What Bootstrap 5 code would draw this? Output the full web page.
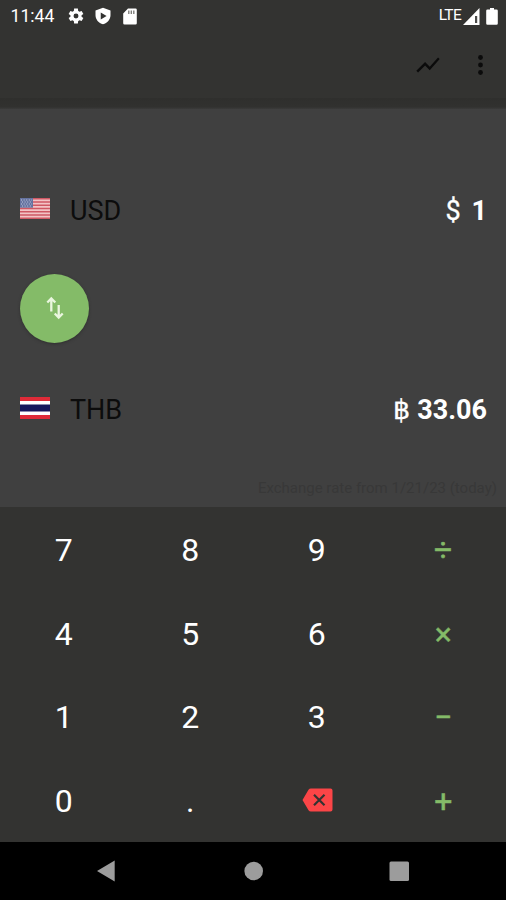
<!DOCTYPE html>
<html lang="en">
<head>
<meta charset="utf-8">
<meta name="viewport" content="width=device-width, initial-scale=1">
<title>Currency converter</title>
<link href="https://cdn.jsdelivr.net/npm/bootstrap@5.3.0/dist/css/bootstrap.min.css" rel="stylesheet">
<style>
body{font-family:Roboto,"Liberation Sans",sans-serif;background:#333331;color:#fff;line-height:1}
svg{display:block;flex:none}
.app{height:900px;overflow:hidden}
.status{height:32px;font-size:17.6px;padding:0 8px 0 10.5px}
.status span{padding-top:1px}
.status .lte{font-size:15.5px;letter-spacing:-.7px;padding:0}
.gear{margin-left:13px}
.shield{margin-left:9px}
.sdcard{margin-left:11px}
.signal{margin-left:2px}
.battery{margin-left:6px}
.toolbar{height:66px;padding:0 14.500px 0 0;gap:26px}
.edge{height:11px;background:linear-gradient(#2f2f2d,#31312f 80%,#3b3b3a)}
.panel{height:398px;background:#404040;padding:71px 19px 0 20px}
.cur{height:60px;font-size:27px}
.cur svg{margin-bottom:3px}
.cur span{padding-top:2px}
.code{color:#0c0c0c;margin-left:20px}
.symbol{-webkit-text-stroke:.3px #fff}
.swaprow{height:139px;padding-bottom:3px}
.swap{width:69px;height:69px;background:#84bb68;box-shadow:0 1px 3px #2228}
.rate{font-size:15px;color:#383838;margin-right:-10px;padding-bottom:11px}
.keys{height:335px}
.key{height:83.6px;font-size:32px;color:#fff;background:none;border:0;padding:2px 0 0 1px}
.key svg{margin:0 0 2px 1px}
.op{color:#84bb68;-webkit-text-stroke:.4px #84bb68}
.sys{height:58px;background:#000}
</style>
</head>
<body>
<div class="app d-flex flex-column">
  <header class="status d-flex align-items-center justify-content-between">
    <div class="d-flex align-items-center">
      <span>11:44</span>
      <svg class="gear" width="18" height="18" viewBox="0 0 24 24" fill="#fff"><path fill-rule="evenodd" d="M19.4 13a7.5 7.5 0 0 0 0-2l2.4-1.800-2.300-4-2.900 1.200a8 8 0 0 0-1.700-1L14.500 2h-5l-.400 3.400a8 8 0 0 0-1.700 1L4.500 5.200l-2.300 4L4.600 11a7.500 7.500 0 0 0 0 2l-2.400 1.800 2.300 4 2.900-1.200a8 8 0 0 0 1.700 1l.400 3.400h5l.400-3.400a8 8 0 0 0 1.700-1l2.900 1.200 2.300-4zM12 8.700a3.300 3.300 0 1 1 0 6.600 3.300 3.300 0 0 1 0-6.600z"/></svg>
      <svg class="shield" width="18" height="18" viewBox="0 0 24 24" fill="#fff"><path fill-rule="evenodd" d="M12 1 2 4.800V11c0 5.500 4.200 10.500 10 12 5.800-1.500 10-6.500 10-12V4.800zM9 7.200 16.800 12 9 16.500z"/></svg>
      <svg class="sdcard" width="14" height="17" viewBox="0 0 14 17"><path fill="#fff" d="M5 .5h7.500a1.300 1.300 0 0 1 1.300 1.300v13.400a1.300 1.300 0 0 1-1.300 1.300h-11A1.300 1.300 0 0 1 .2 15.200V5.500z"/><path stroke="#777773" stroke-width="1.300" d="M5.800 2.500v3.500M8.300 2.500v3.500M10.800 2.500v3.500"/></svg>
    </div>
    <div class="d-flex align-items-center">
      <span class="lte">LTE</span>
      <svg class="signal" width="17" height="17" viewBox="0 0 17 17"><path fill="#fff" d="M16.500 0v17H0z"/><path fill="#4b4b49" d="M12 8h2.200v7H12z"/></svg>
      <svg class="battery" width="12" height="17" viewBox="0 0 12 17"><path fill="#fff" d="M4 0h4v1.500h2.500a1.300 1.300 0 0 1 1.300 1.300v12.700a1.300 1.300 0 0 1-1.300 1.300h-9A1.300 1.300 0 0 1 .2 15.500V2.800A1.300 1.300 0 0 1 1.500 1.500H4z"/></svg>
    </div>
  </header>
  <nav class="toolbar d-flex align-items-center justify-content-end">
    <svg width="28" height="28" viewBox="0 0 24 24" fill="#0b0b0b"><path d="m3.500 18.490 6-6.010 4 4L22 6.920l-1.410-1.410-7.090 7.970-4-4L2 16.990z"/></svg>
    <svg width="24" height="28" viewBox="0 0 24 28" fill="#0b0b0b"><circle cx="12.500" cy="6.500" r="2.400"/><circle cx="12.500" cy="14" r="2.400"/><circle cx="12.500" cy="21.500" r="2.400"/></svg>
  </nav>
  <div class="edge"></div>
  <main class="panel d-flex flex-column">
    <div class="cur d-flex align-items-center">
      <svg width="30" height="21" viewBox="0 0 30 21"><path fill="#f3c3c5" d="M0 0h30v21H0z"/><path stroke="#cf5864" stroke-width="1.620" d="M0 .8h30M0 4h30M0 7.300h30M0 10.500h30M0 13.700h30M0 17h30M0 20.200h30"/><path fill="#6573a0" d="M0 0h13v9.700H0z"/><path stroke="#c5cbe0" stroke-width="1" stroke-dasharray="1 1.600" d="M1 2h11M2 4h10M1 6h11M2 8h10"/></svg>
      <span class="code">USD</span>
      <span class="ms-auto fw-bold"><span class="fw-normal symbol">$</span><span class="ms-1"> 1</span></span>
    </div>
    <div class="swaprow d-flex align-items-center">
      <button class="swap btn rounded-circle p-0 d-flex align-items-center justify-content-center border-0" aria-label="Swap currencies">
        <svg width="18" height="24" viewBox="0 0 18 24" fill="none" stroke="#eaf6df" stroke-width="2.300"><path d="M5.300 15.500V3.500M1.300 6.500l4-4 4 4M12.700 9v12M8.700 17.500l4 4 4-4"/></svg>
      </button>
    </div>
    <div class="cur d-flex align-items-center">
      <svg width="30" height="22" viewBox="0 0 30 22"><path fill="#df2b38" d="M0 0h30v22H0z"/><path fill="#fff" d="M0 4h30v14H0z"/><path fill="#17175b" d="M0 7.500h30v7H0z"/></svg>
      <span class="code">THB</span>
      <span class="ms-auto fw-bold"><span class="fw-normal symbol">฿</span> 33.06</span>
    </div>
    <div class="rate mt-auto text-end">Exchange rate from 1/21/23 (today)</div>
  </main>
  <section class="keys row row-cols-4 g-0">
    <button class="key col">7</button><button class="key col">8</button><button class="key col">9</button><button class="key op col">÷</button>
    <button class="key col">4</button><button class="key col">5</button><button class="key col">6</button><button class="key op col">×</button>
    <button class="key col">1</button><button class="key col">2</button><button class="key col">3</button><button class="key op col">−</button>
    <button class="key col">0</button><button class="key col">.</button>
    <button class="key col d-flex align-items-center justify-content-center" aria-label="Delete"><svg width="31" height="24" viewBox="0 0 31 24"><path fill="#fb4547" d="M9 .5h19.500A2 2 0 0 1 30.500 2.500v19a2 2 0 0 1-2 2H9a3 3 0 0 1-2.500-1.300L.5 12l6-10.200A3 3 0 0 1 9 .5z"/><path stroke="#333331" stroke-width="2.200" d="m12 6.700 10.500 10.500m0-10.500L12 17.200"/></svg></button>
    <button class="key op col">+</button>
  </section>
  <footer class="sys d-flex align-items-center">
    <svg width="506" height="58" viewBox="0 1 506 58" fill="#9c9c9c"><path d="M97 30l17.700-10.500v21z"/><circle cx="253.700" cy="30" r="9.300"/><rect x="389.500" y="20.500" width="19.500" height="19.500" rx="1.500"/></svg>
  </footer>
</div>
<script src="https://cdn.jsdelivr.net/npm/bootstrap@5.3.0/dist/js/bootstrap.bundle.min.js"></script>
</body>
</html>
